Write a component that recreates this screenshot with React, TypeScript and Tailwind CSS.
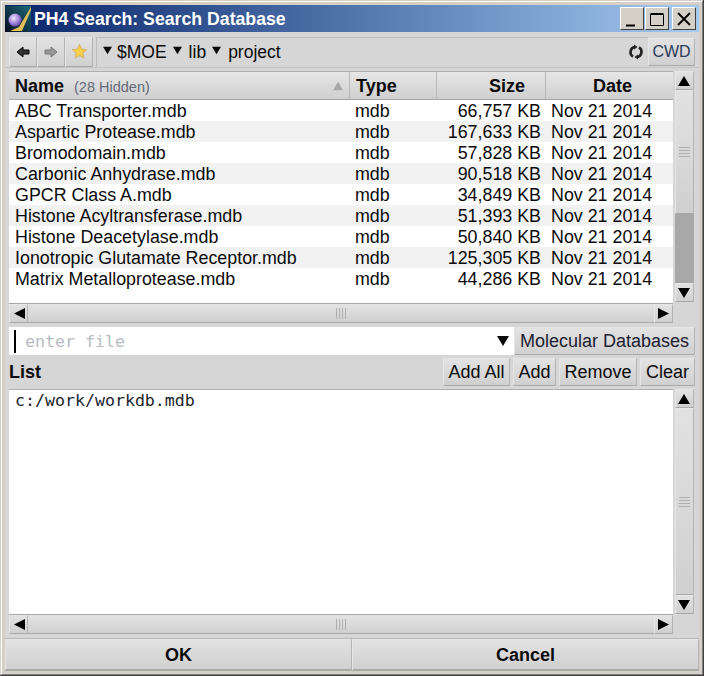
import type { ReactNode } from "react";

const rows = [
  ["ABC Transporter.mdb", "66,757 KB"],
  ["Aspartic Protease.mdb", "167,633 KB"],
  ["Bromodomain.mdb", "57,828 KB"],
  ["Carbonic Anhydrase.mdb", "90,518 KB"],
  ["GPCR Class A.mdb", "34,849 KB"],
  ["Histone Acyltransferase.mdb", "51,393 KB"],
  ["Histone Deacetylase.mdb", "50,840 KB"],
  ["Ionotropic Glutamate Receptor.mdb", "125,305 KB"],
  ["Matrix Metalloprotease.mdb", "44,286 KB"],
];

const raised =
  "border border-t-[#e6e6e6] border-l-[#e6e6e6] border-r-[#b4b4b4] border-b-[#a8a8a8] bg-gradient-to-b from-[#e2e2e2] to-[#d0d0d0]";

function Tri({ dir, className = "" }: { dir: "up" | "down" | "left" | "right"; className?: string }) {
  const points = {
    up: "6,1 12,11 0,11",
    down: "0,1 12,1 6,11",
    left: "12,0 12,11 1,5.5",
    right: "0,0 0,11 11,5.5",
  }[dir];
  return (
    <svg width="12" height="12" viewBox="0 0 12 12" className={className}>
      <polygon points={points} fill="currentColor" />
    </svg>
  );
}

function ScrollBtn({ dir }: { dir: "up" | "down" | "left" | "right" }) {
  return (
    <div className={`h-[19px] w-[19px] ${raised} flex shrink-0 items-center justify-center text-black`}>
      <Tri dir={dir} />
    </div>
  );
}

function Grip({ vertical }: { vertical?: boolean }) {
  return (
    <div className={`flex ${vertical ? "flex-col" : ""} gap-[2px]`}>
      {[0, 1, 2, 3].map((i) => (
        <span key={i} className={`${vertical ? "h-px w-[11px]" : "h-[11px] w-px"} bg-[#b0b0b0]`} />
      ))}
    </div>
  );
}

function HScroll() {
  return (
    <div className="flex h-[20px] shrink-0 border-y border-[#a8a8a8] bg-[#d8d8d8]">
      <ScrollBtn dir="left" />
      <div className="flex flex-1 items-center justify-center bg-gradient-to-b from-[#e4e4e4] to-[#d0d0d0]">
        <Grip />
      </div>
      <ScrollBtn dir="right" />
    </div>
  );
}

function HeadCell({ className, children }: { className: string; children: ReactNode }) {
  return (
    <div
      className={`flex h-[27px] shrink-0 items-center border-r border-[#b8b8b8] bg-gradient-to-b from-[#e6e6e6] to-[#cfcfcf] pt-px text-[18px] font-bold ${className}`}
    >
      {children}
    </div>
  );
}

function SmallBtn({ children, className = "" }: { children: ReactNode; className?: string }) {
  return (
    <div className={`flex h-[28px] items-center justify-center text-[18px] ${raised} ${className}`}>{children}</div>
  );
}

export default function App() {
  return (
    <div className="flex h-[676px] w-[704px] flex-col bg-[#d4d0c8] px-[5px] pt-[5px] font-['Liberation_Sans',Arial,sans-serif] text-[#0b0b0b] shadow-[inset_-1px_-1px_0_#404040,inset_1px_1px_0_#d4d0c8,inset_-2px_-2px_0_#808080,inset_2px_2px_0_#ffffff]">
      {/* title bar */}
      <div className="flex h-[27px] shrink-0 items-center bg-gradient-to-r from-[#0a246a] to-[#a6caf0] pr-[3px]">
        <svg width="26" height="26" viewBox="0 0 26 26" className="shrink-0">
          <defs>
            <linearGradient id="ph4bg" x1="1" y1="0" x2="0" y2="1">
              <stop offset="0" stopColor="#1f6a78" />
              <stop offset="1" stopColor="#050a20" />
            </linearGradient>
            <radialGradient id="ph4ball" cx="0.4" cy="0.35" r="0.7">
              <stop offset="0" stopColor="#efe6fb" />
              <stop offset="0.6" stopColor="#9c7fd8" />
              <stop offset="1" stopColor="#5a3d9c" />
            </radialGradient>
          </defs>
          <rect width="26" height="26" fill="url(#ph4bg)" />
          <polygon points="5,25 14,21 26,1 26,4 17,25" fill="#e3bd55" />
          <circle cx="10" cy="14" r="6.5" fill="url(#ph4ball)" />
        </svg>
        <span className="ml-[3px] flex-1 pt-px text-[17.700px] font-bold text-white">PH4 Search: Search Database</span>
        {["min", "max", "close"].map((k) => (
          <div
            key={k}
            className={`${k === "close" ? "ml-[3px]" : "ml-px"} flex h-[23px] w-[24px] items-center justify-center border border-t-white border-l-white border-r-[#404040] border-b-[#404040] bg-[#d4d0c8]`}
          >
            <svg width="18" height="18" viewBox="0 0 18 18" stroke="#000" fill="none">
              {k === "min" && <path d="M3 15.500h9" strokeWidth="2" />}
              {k === "max" && <path d="M2.500 4.500h13v11h-13zM2.500 3.500h13" strokeWidth="1" />}
              {k === "close" && <path d="M3 3l12 12M15 3L3 15" strokeWidth="1.800" />}
            </svg>
          </div>
        ))}
      </div>

      <div className="flex flex-1 flex-col bg-[#d6d6d6]">
        {/* toolbar */}
        <div className="flex h-[36px] shrink-0 items-center border-b border-[#c4c4c4] px-[4px] pt-[4px]">
          <div className="flex w-full items-center">
            {["back", "fwd", "star"].map((k) => (
              <div key={k} className={`flex h-[30px] w-[28px] items-center justify-center ${raised}`}>
                {k === "back" && (
                  <svg width="14" height="12" viewBox="0 0 14 12">
                    <path d="M1 6l6-5v3h6v4H7v3z" fill="#333" stroke="#000" />
                  </svg>
                )}
                {k === "fwd" && (
                  <svg width="14" height="12" viewBox="0 0 14 12">
                    <path d="M13 6L7 1v3H1v4h6v3z" fill="#999" stroke="#777" />
                  </svg>
                )}
                {k === "star" && (
                  <svg width="17" height="17" viewBox="0 0 24 24">
                    <path
                      d="M12 2l3 6.600 7.200.8-5.400 4.800 1.500 7.100L12 17.700l-6.300 3.600 1.500-7.100L1.800 9.400 9 8.600z"
                      fill="#f7cf4e"
                      stroke="#c9a94e"
                    />
                  </svg>
                )}
              </div>
            ))}
            <div className="ml-[3px] flex h-[30px] flex-1 items-center border-l border-t border-[#bcbcbc] pl-[6px] text-[17.500px]">
              <Tri dir="down" className="mb-[3px] mr-[5px] h-[9px] w-[9px]" />
              <span>$MOE</span>
              <Tri dir="down" className="mb-[3px] ml-[6px] mr-[7px] h-[9px] w-[9px]" />
              <span>lib</span>
              <Tri dir="down" className="mb-[3px] ml-[6px] mr-[7px] h-[9px] w-[9px]" />
              <span>project</span>
              <svg width="16" height="16" viewBox="0 0 16 16" fill="none" className="ml-auto mr-[4px]">
                <path d="M7 3A5.200 5.200 0 0 0 5 12.600M9 13A5.200 5.200 0 0 0 11 3.400" stroke="#222" strokeWidth="2.600" />
                <path d="M6 0.500v5l3.500-2.500zM10 15.500v-5L6.500 13z" fill="#222" />
              </svg>
            </div>
            <div className={`flex h-[28px] w-[47px] items-center justify-center text-[16px] text-[#2a3a5a] ${raised}`}>
              CWD
            </div>
          </div>
        </div>

        <div className="flex flex-col px-[4px]">
          {/* file table */}
          <div className="mt-[3px] flex h-[252px] shrink-0">
            <div className="flex w-[664px] shrink-0 flex-col">
              <div className="flex flex-1 flex-col border-t border-[#b0b0b0] bg-white">
                <div className="flex">
                  <HeadCell className="w-[341px] justify-between pl-[6px] pr-[6px]">
                    <span>
                      Name <span className="ml-[5px] text-[14.500px] font-normal text-[#666a78]">(28 Hidden)</span>
                    </span>
                    <Tri dir="up" className="h-[10px] w-[10px] text-[#a8a8a8]" />
                  </HeadCell>
                  <HeadCell className="w-[87px] pl-[6px]">Type</HeadCell>
                  <HeadCell className="w-[109px] justify-end pr-[20px]">Size</HeadCell>
                  <HeadCell className="w-[127px] justify-center border-r-0 pl-[6px]">Date</HeadCell>
                </div>
                <div className="flex-1 border-t border-[#a8a8a8]">
                  {rows.map(([name, size], i) => (
                    <div
                      key={name}
                      className={`flex h-[21px] items-center pt-[3px] text-[17.850px] leading-none ${i % 2 === 1 ? "bg-[#f2f2f2]" : "bg-white"}`}
                    >
                      <span className="w-[346px] shrink-0 pl-[6px]">{name}</span>
                      <span className="w-[56px] shrink-0">mdb</span>
                      <span className="w-[130px] shrink-0 text-right">{size}</span>
                      <span className="ml-[10px]">Nov 21 2014</span>
                    </div>
                  ))}
                </div>
              </div>
              <HScroll />
            </div>
            <div className="ml-px flex h-[231px] w-[20px] shrink-0 flex-col items-center">
              <ScrollBtn dir="up" />
              <div className="flex w-[19px] flex-1 flex-col">
                <div className={`flex h-[124px] items-center justify-center ${raised}`}>
                  <Grip vertical />
                </div>
                <div className="flex-1 bg-[#a8a8a8]" />
              </div>
              <ScrollBtn dir="down" />
            </div>
          </div>

          {/* file entry */}
          <div className="mt-[4px] flex h-[28px] shrink-0">
            <div className="flex w-[505px] items-center bg-white pl-[5px] pr-[5px]">
              <span className="h-[23px] w-[2px] bg-black" />
              <span className="ml-[9px] flex-1 pt-[2px] font-['DejaVu_Sans_Mono',monospace] text-[16.600px] text-[#b8bcc4]">
                enter file
              </span>
              <Tri dir="down" />
            </div>
            <SmallBtn className="flex-1 text-[#1c2030]">Molecular Databases</SmallBtn>
          </div>

          {/* list header */}
          <div className="mt-[3px] flex h-[28px] shrink-0 items-center">
            <span className="flex-1 text-[18px] font-bold">List</span>
            <div className="flex gap-[3px]">
              <SmallBtn className="w-[67px]">Add All</SmallBtn>
              <SmallBtn className="w-[43px]">Add</SmallBtn>
              <SmallBtn className="w-[78px]">Remove</SmallBtn>
              <SmallBtn className="w-[55px]">Clear</SmallBtn>
            </div>
          </div>

          {/* list box */}
          <div className="mt-[3px] flex h-[245px] shrink-0">
            <div className="flex w-[664px] shrink-0 flex-col">
              <div className="flex-1 border-t border-[#b0b0b0] bg-white pl-[6px] font-['DejaVu_Sans_Mono',monospace] text-[16.600px] leading-[22px] text-[#20242c]">
                c:/work/workdb.mdb
              </div>
              <HScroll />
            </div>
            <div className="ml-px flex h-[225px] w-[20px] shrink-0 flex-col items-center">
              <ScrollBtn dir="up" />
              <div className={`flex w-[19px] flex-1 items-center justify-center ${raised}`}>
                <Grip vertical />
              </div>
              <ScrollBtn dir="down" />
            </div>
          </div>
        </div>

        {/* dialog buttons */}
        <div className="mt-auto flex h-[33px] shrink-0 border-t border-[#b8b8b8]">
          <div className={`flex w-[347px] items-center justify-center pt-px text-[18px] font-bold ${raised} border-b-2`}>OK</div>
          <div className={`flex flex-1 items-center justify-center pt-px text-[18px] font-bold ${raised} border-b-2`}>Cancel</div>
        </div>
      </div>
      <div className="h-[5px] shrink-0" />
    </div>
  );
}
